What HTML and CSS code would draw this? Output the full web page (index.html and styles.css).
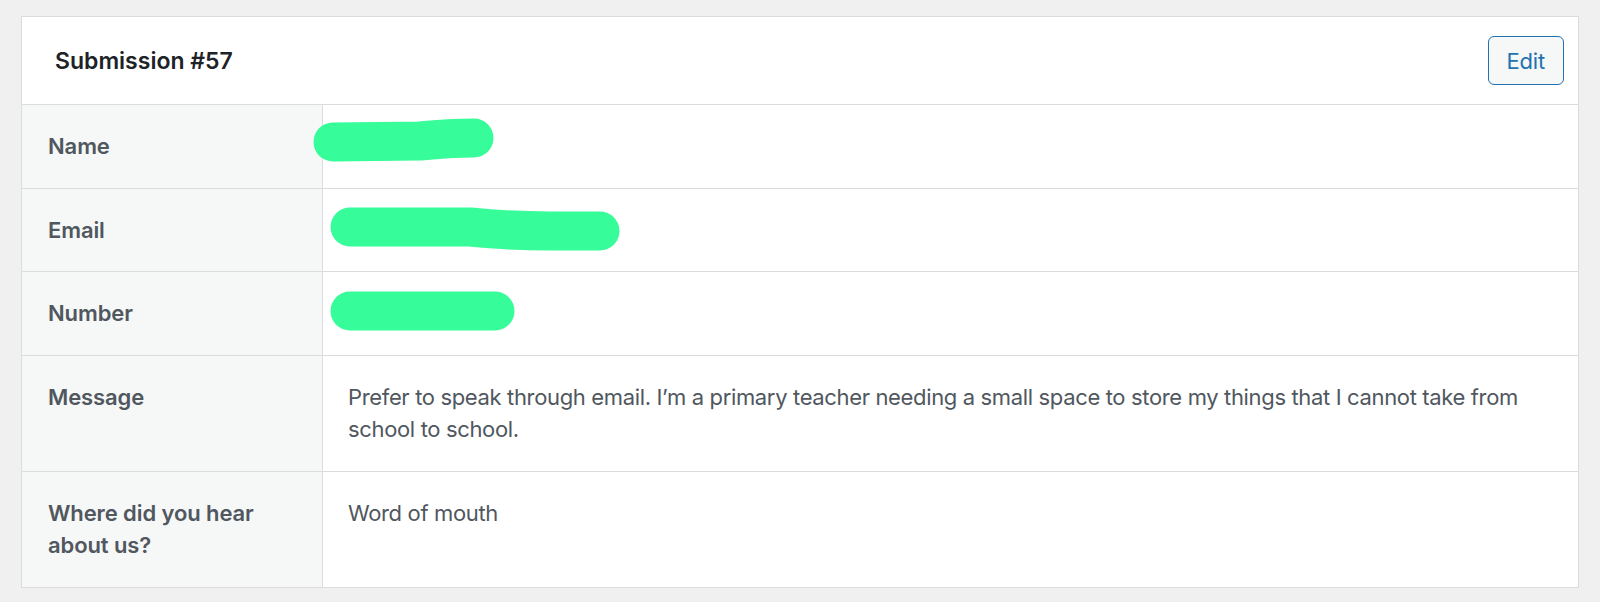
FILE: index.html
```html
<!DOCTYPE html>
<html lang="en">
<head>
<meta charset="utf-8">
<title>Submission #57</title>
<link rel="stylesheet" href="styles.css">
</head>
<body>
<div class="card">
  <div class="card-header">
    <h2 class="title">Submission #57</h2>
    <button class="btn-edit" type="button">Edit</button>
  </div>
  <div class="row"><div class="label">Name</div><div class="value">&nbsp;</div></div>
  <div class="row"><div class="label">Email</div><div class="value">&nbsp;</div></div>
  <div class="row"><div class="label">Number</div><div class="value">&nbsp;</div></div>
  <div class="row"><div class="label">Message</div><div class="value">Prefer to speak through email. I’m a primary teacher needing a small space to store my things that I cannot take from school to school.</div></div>
  <div class="row last"><div class="label">Where did you hear about us?</div><div class="value">Word of mouth</div></div>
  <svg class="redact" aria-hidden="true">
    <path d="M311 125 L398 124 Q428 121 452 121"/>
    <path d="M328 210 L448 210 Q488 214 528 214 L578 214"/>
    <path d="M328 294 L473 294"/>
  </svg>
</div>
</body>
</html>
```

FILE: styles.css
```css
* { box-sizing: border-box; }

html, body {
  margin: 0;
  background: #f0f0f1;
}

body {
  padding: 16px 21px 0;
  font-family: Inter, "Noto Sans", sans-serif;
  color: #3c434a;
}

.card {
  position: relative;
  background: #fff;
  border: 1px solid #dcdcde;
}

.card-header {
  display: flex;
  align-items: center;
  justify-content: space-between;
  height: 88px;
  padding: 0 14px 0 33px;
  border-bottom: 1px solid #dcdcde;
}

.title {
  margin: 0;
  font-size: 23px;
  font-weight: 600;
  color: #1d2327;
}

.btn-edit {
  height: 49px;
  padding: 0 18px;
  border: 1px solid #2271b1;
  border-radius: 6px;
  background: #f6f7f7;
  color: #2271b1;
  font-family: inherit;
  font-size: 22px;
  letter-spacing: -0.2px;
}

.row {
  display: grid;
  grid-template-columns: 301px 1fr;
  border-bottom: 1px solid #dcdcde;
  font-size: 22px;
  line-height: 32.5px;
}

.row.last { border-bottom: 0; }

.label {
  padding: 25px 26px;
  background: #f6f7f7;
  border-right: 1px solid #dcdcde;
  font-weight: 600;
  color: #50575e;
  letter-spacing: -0.1px;
}

.value {
  padding: 25px 24px 25px 25px;
  color: #50575e;
  letter-spacing: -0.35px;
}

.redact {
  position: absolute;
  left: 0;
  top: 0;
  width: 100%;
  height: 100%;
  pointer-events: none;
  fill: none;
  stroke: #36fd9a;
  stroke-width: 39;
  stroke-linecap: round;
  stroke-linejoin: round;
}
```
